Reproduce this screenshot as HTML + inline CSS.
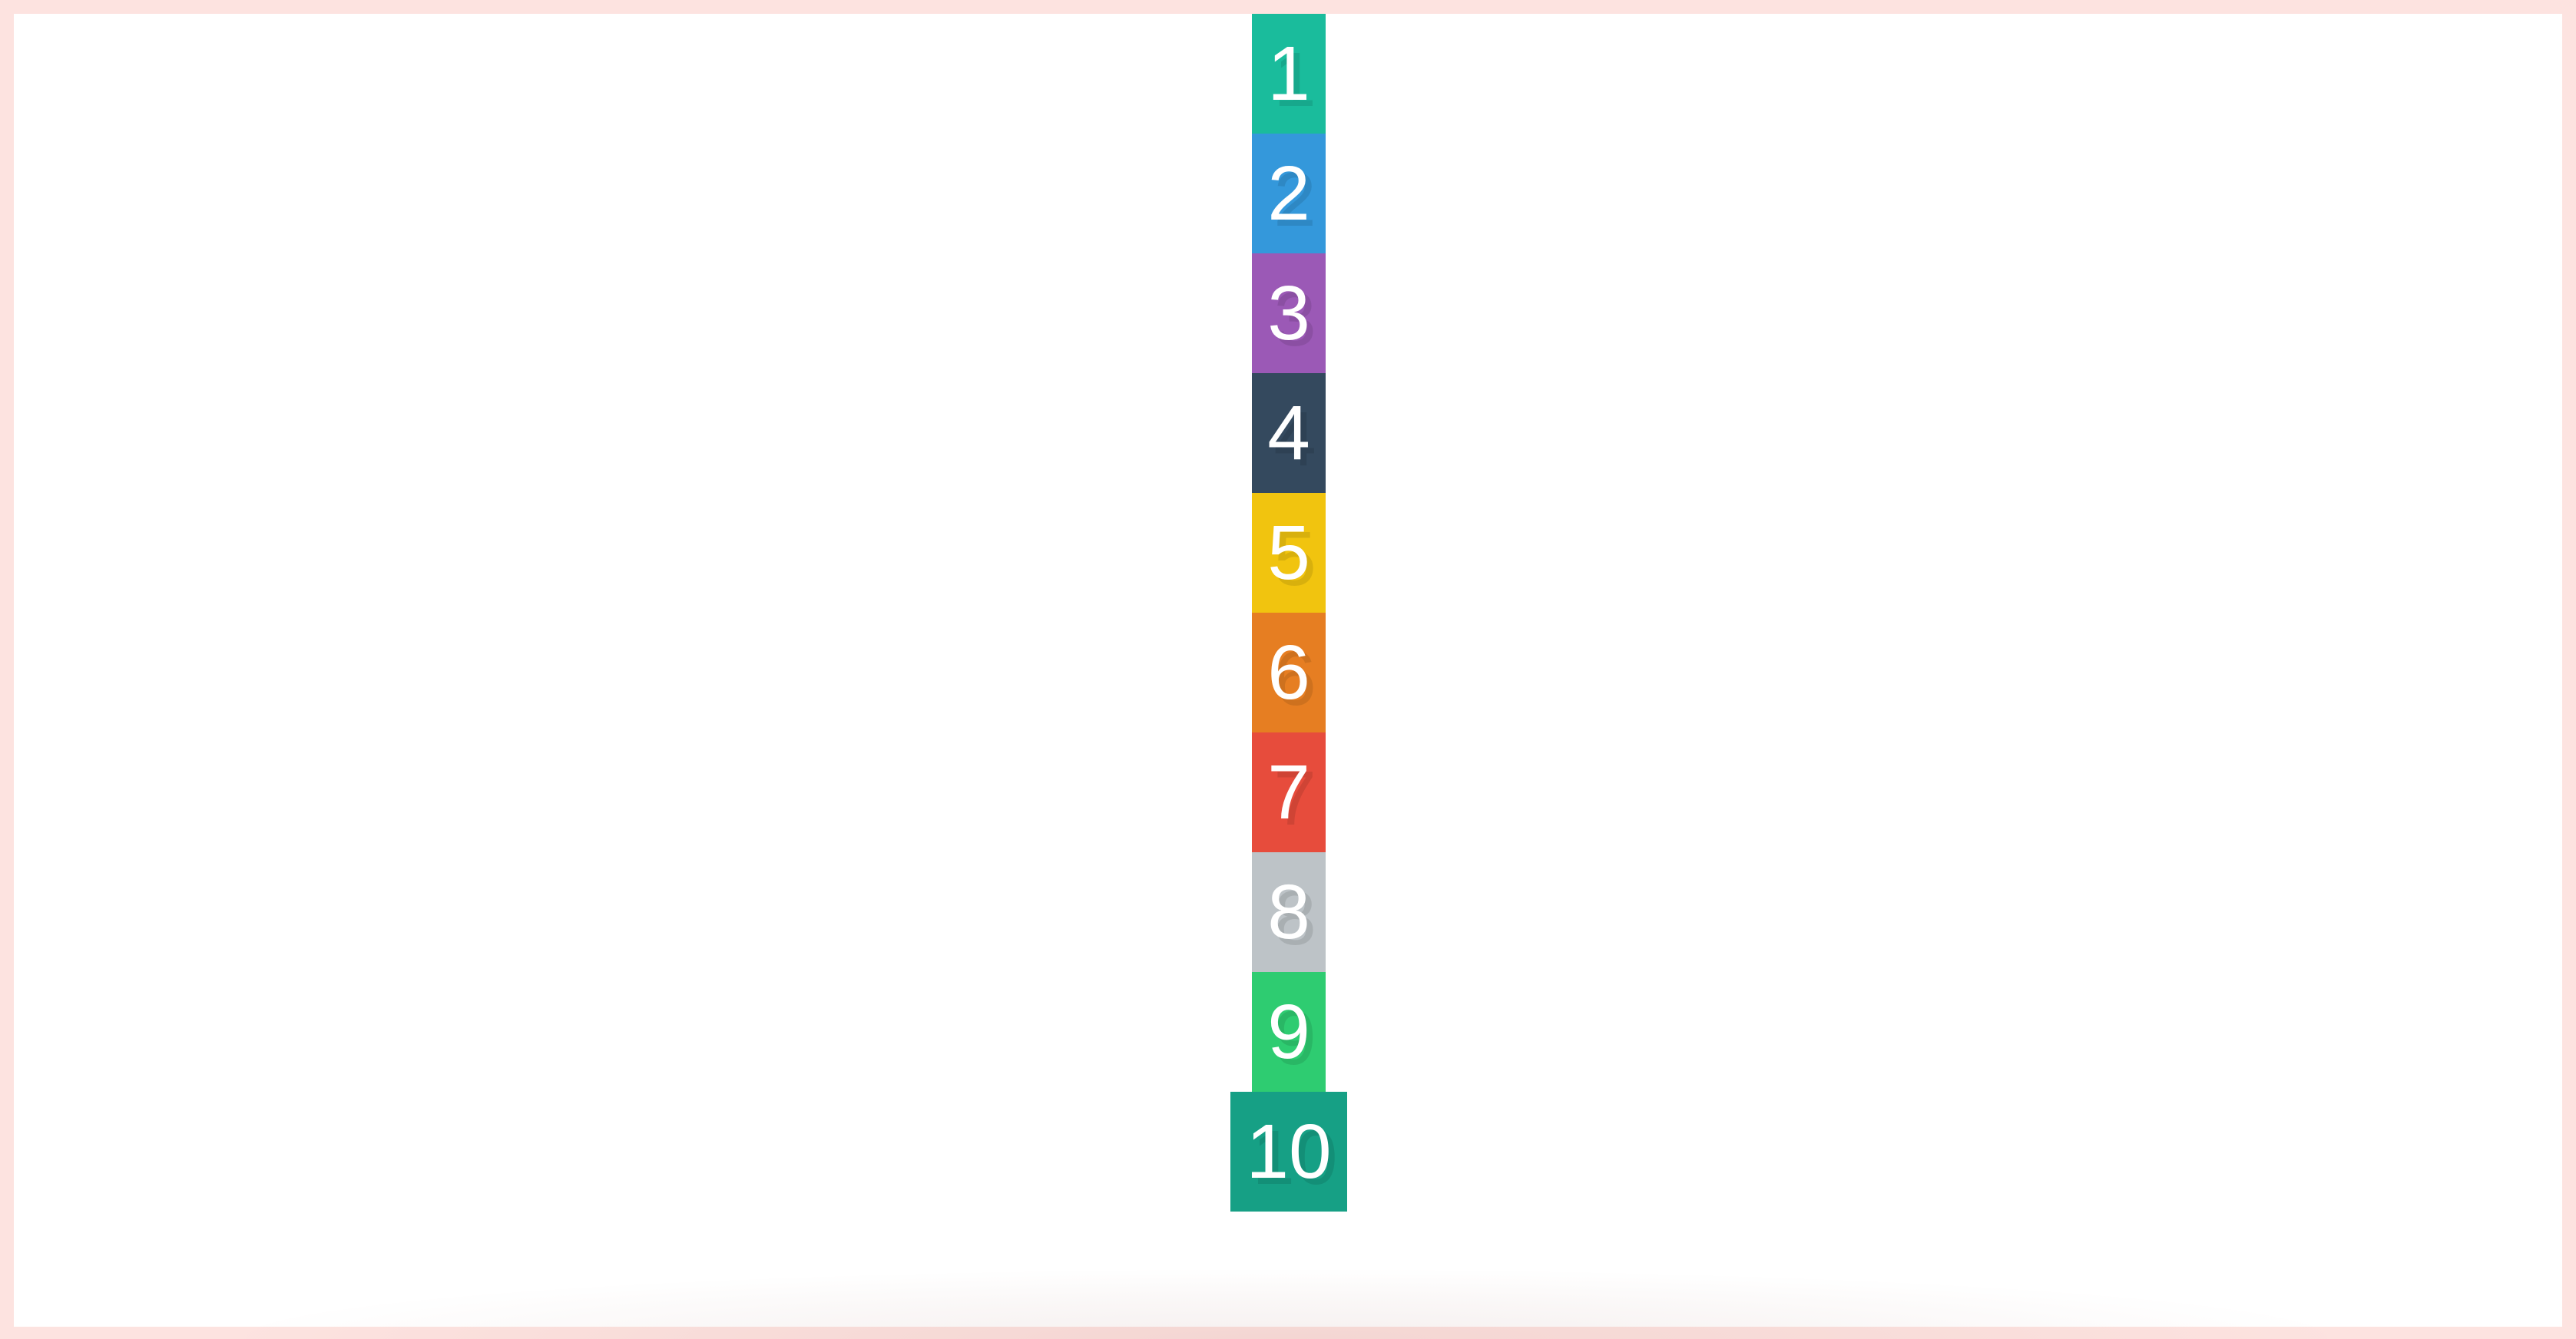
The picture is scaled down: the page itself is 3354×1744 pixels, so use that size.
<!DOCTYPE html>
<html><head><style>
html,body{margin:0;padding:0;width:3354px;height:1744px;overflow:hidden;}
body{position:relative;background:#fde3e0;font-family:"Liberation Sans",Arial,sans-serif;}
.inner{position:absolute;left:18px;top:18px;width:3318px;height:1710px;background:#fff;}
.sh{position:absolute;left:280px;top:1620px;width:2790px;height:124px;background:radial-gradient(ellipse 50% 75% at 50% 100%,rgba(120,40,30,0.07) 0%,rgba(120,40,30,0.04) 50%,rgba(120,40,30,0) 100%);}
.b{position:absolute;left:1630px;width:96px;height:156px;color:#fff;font-size:100px;line-height:156px;text-align:center;text-shadow:8px 8px 0 rgba(0,0,0,0.1);}
</style></head><body>
<div class="inner"></div>
<div class="sh"></div>
<div class="b" style="top:18px;background:#1abc9c">1</div>
<div class="b" style="top:174px;background:#3498db">2</div>
<div class="b" style="top:330px;background:#9b59b6">3</div>
<div class="b" style="top:486px;background:#34495e">4</div>
<div class="b" style="top:642px;background:#f1c40f">5</div>
<div class="b" style="top:798px;background:#e67e22">6</div>
<div class="b" style="top:954px;background:#e74c3c">7</div>
<div class="b" style="top:1110px;background:#bdc3c7">8</div>
<div class="b" style="top:1266px;background:#2ecc71">9</div>
<div class="b" style="top:1422px;left:1602px;width:152px;background:#16a085">10</div>
</body></html>
